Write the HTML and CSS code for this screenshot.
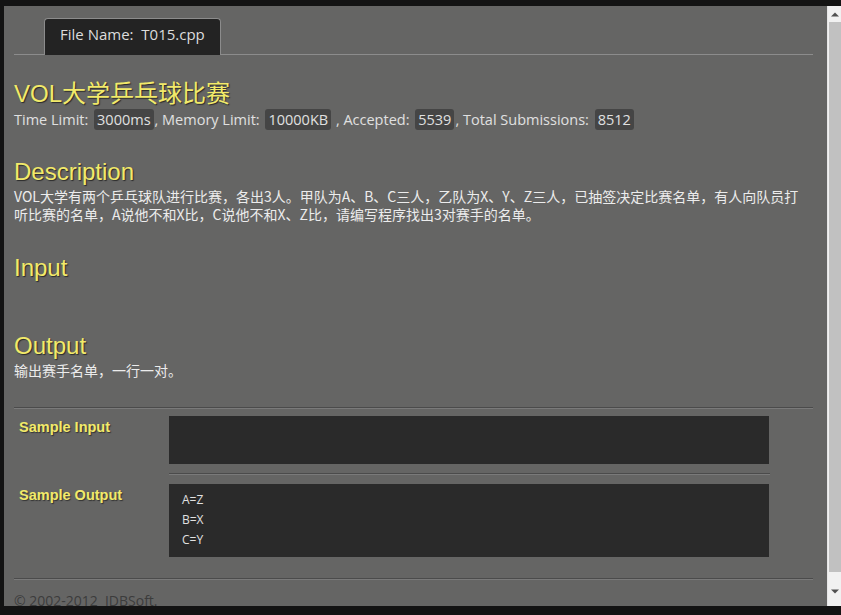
FILE: index.html
```html
<!DOCTYPE html>
<html>
<head>
<meta charset="utf-8">
<link rel="stylesheet" href="styles.css">
</head>
<body>
<div class="frame">
  <div class="page">
    <div class="tabs">
      <div class="tab">File Name:&nbsp; T015.cpp</div>
    </div>
    <h1 class="title">VOL大学乒乓球比赛</h1>
    <div class="info">Time Limit: <span class="code">3000ms</span>, Memory Limit: <span class="code">10000KB</span> , Accepted: <span class="code">5539</span>, Total Submissions: <span class="code">8512</span></div>

    <h2 class="head head-desc">Description</h2>
    <p class="text">VOL大学有两个乒乓球队进行比赛，各出3人。甲队为A、B、C三人，乙队为X、Y、Z三人，已抽签决定比赛名单，有人向队员打听比赛的名单，A说他不和X比，C说他不和X、Z比，请编写程序找出3对赛手的名单。</p>

    <h2 class="head head-input">Input</h2>
    <p class="text empty"></p>

    <h2 class="head head-output">Output</h2>
    <p class="text text-output">输出赛手名单，一行一对。</p>

    <div class="rule"></div>

    <div class="sample">
      <div class="label">Sample Input</div>
      <div class="box box-in"></div>
    </div>
    <div class="sep-row"><div class="sep"></div></div>
    <div class="sample sample-out">
      <div class="label">Sample Output</div>
      <div class="box box-out">A=Z<br>B=X<br>C=Y</div>
    </div>

    <div class="rule rule-foot"></div>
    <div class="footer">© 2002-2012&nbsp; JDBSoft.</div>
  </div>
  <div class="scrollbar">
    <div class="sb-btn"><svg width="8" height="5" viewBox="0 0 8 5"><polygon points="0,4.5 4,0.5 8,4.5" fill="#505050"/></svg></div>
    <div class="sb-thumb"></div>
    <div class="sb-fill"></div>
    <div class="sb-btn sb-btn-down"><svg width="8" height="5" viewBox="0 0 8 5"><polygon points="0,0.5 8,0.5 4,4.5" fill="#505050"/></svg></div>
  </div>
</div>
</body>
</html>
```

FILE: styles.css
```css
html, body {
  margin: 0;
  padding: 0;
  background: #131313;
  height: 615px;
  overflow: hidden;
}
.frame {
  margin: 6px 0 0 4px;
  height: 600px;
  display: flex;
  overflow: hidden;
}
.page {
  width: 823px;
  flex: none;
  box-sizing: border-box;
  height: 600px;
  overflow: hidden;
  background: #656564;
  padding: 10px 14px 0 10px;
  font-family: "Open Sans", "Noto Sans", sans-serif;
  color: #e4e4e4;
}
.scrollbar {
  width: 14px;
  height: 600px;
  flex: none;
  background: #f1f1f1;
  border-left: 1px solid #e6e6e6;
  box-sizing: border-box;
  display: flex;
  flex-direction: column;
}
.sb-btn {
  height: 16px;
  flex: none;
  display: flex;
  align-items: center;
  justify-content: center;
  background: #f1f1f1;
  padding-left: 1px;
}
.sb-btn svg { display: block; }
.sb-btn-down {
  height: 20px;
  align-items: flex-start;
  padding-top: 3px;
  box-sizing: border-box;
}
.sb-thumb {
  height: 550px;
  flex: none;
  background: #c1c1c1;
  margin-left: 1px;
}
.sb-fill { flex: 1; }
.tabs {
  border-bottom: 1px solid #8c8c8c;
  padding-left: 30px;
  height: 38px;
  display: flex;
  align-items: flex-end;
}
.tab {
  background: #232323;
  border: 1px solid #8c8c8c;
  border-bottom: none;
  border-radius: 4px 4px 0 0;
  height: 37px;
  box-sizing: border-box;
  width: 177px;
  padding: 5px 0 0 15px;
  font-size: 15px;
  color: #dcdcdc;
  margin-bottom: -1px;
}
.title, .head {
  font-family: "Liberation Sans", Arial, "Noto Sans CJK SC", sans-serif;
  font-weight: normal;
  font-size: 24px;
  line-height: 28px;
  color: #f2ea6a;
  text-shadow: 1px 1px 1px #2a2a2a;
  margin: 0;
}
.title {
  margin-top: 25px;
}
.info {
  font-size: 14.5px;
  line-height: 20px;
  margin-top: 2px;
  color: #e0e0e0;
}
.code {
  background: #454545;
  border-radius: 3px;
  padding: 1px 3px;
  margin: 0 1px 0 2px;
}
.head-desc { margin-top: 28px; }
.head-input { margin-top: 31px; }
.head-output { margin-top: 31px; }
.text {
  margin: 1px 0 0;
  max-width: 796px;
  font-family: "Noto Sans CJK SC", sans-serif;
  font-size: 14px;
  line-height: 18px;
  color: #ececec;
}
.text-output { margin-top: 1px; }
.empty { height: 18px; }
.rule {
  border-top: 1px solid #4b4b4b;
  border-bottom: 1px solid #7a7a7a;
  margin-top: 28px;
}
.sample {
  display: flex;
  margin-top: 7px;
}
.label {
  width: 150px;
  padding-left: 5px;
  padding-top: 3px;
  font-family: "Liberation Sans", Arial, sans-serif;
  font-weight: bold;
  font-size: 14.5px;
  color: #f2ea6a;
  text-shadow: 1px 1px 1px #333;
}
.box {
  width: 600px;
  background: #2a2a2a;
  box-sizing: border-box;
}
.box-in { height: 48px; }
.box-out {
  height: 73px;
  padding: 6px 0 0 13px;
  font-family: "Open Sans", sans-serif;
  font-size: 12px;
  line-height: 20px;
  color: #e0e0e0;
}
.sep-row {
  padding-left: 155px;
  margin-top: 9px;
}
.sep {
  width: 601px;
  border-top: 1px solid #4b4b4b;
  border-bottom: 1px solid #7a7a7a;
}
.sample-out { margin-top: 9px; }
.rule-foot { margin-top: 21px; }
.footer {
  margin-top: 12px;
  font-size: 14px;
  line-height: 18px;
  color: #3c3c3c;
}
```
